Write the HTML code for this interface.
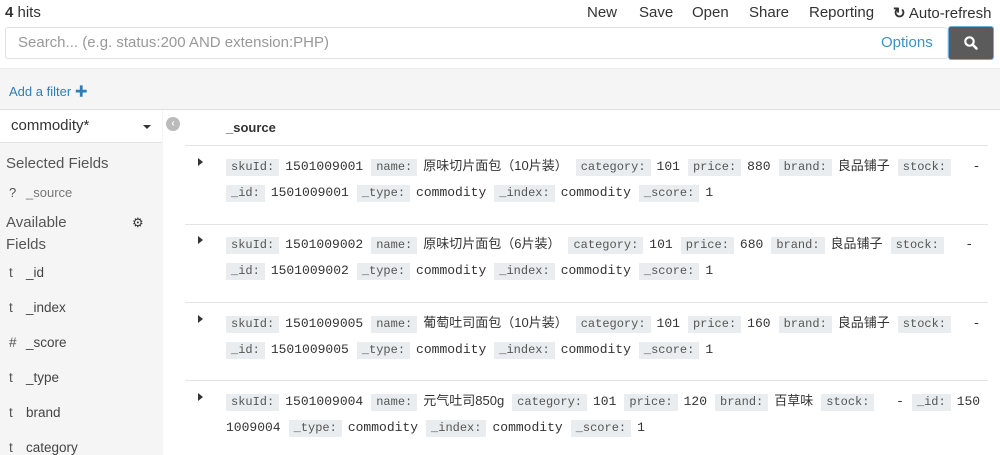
<!DOCTYPE html>
<html><head><meta charset="utf-8"><style>
*{margin:0;padding:0;box-sizing:border-box}
body{width:1000px;height:455px;overflow:hidden;background:#fff;font-family:"Liberation Sans","Noto Sans CJK SC",sans-serif;color:#3f3f3f;position:relative}
.a{position:absolute;white-space:nowrap}
.lb{display:inline-block;background:#e9edef;font-family:"Liberation Mono",monospace;font-size:12px;color:#555;padding:0 5px;line-height:17px;margin-right:6px}
.v{font-family:"Liberation Mono","Noto Sans CJK SC",monospace;font-size:13px;color:#333;margin-right:8px}
.c{font-family:"Liberation Sans","Noto Sans CJK SC",sans-serif;font-size:13px}
.row{position:absolute;left:226px;width:780px;line-height:24.5px;white-space:nowrap}
.tri{position:absolute;left:198px;width:0;height:0;border-top:4px solid transparent;border-bottom:4px solid transparent;border-left:5px solid #333}
.sep{position:absolute;left:185px;width:803px;height:1px;background:#e4e4e4}
.f{position:absolute;left:9px;font-size:13.5px;color:#444}
.f b{font-weight:normal;display:inline-block;width:17px;color:#555}
</style></head><body>
<div class="a" style="left:5px;top:4px;font-size:15px;color:#333"><b>4</b> hits</div>
<div class="a" style="top:4px;left:587px;font-size:15px;color:#333">New</div>
<div class="a" style="top:4px;left:639px;font-size:15px;color:#333">Save</div>
<div class="a" style="top:4px;left:692px;font-size:15px;color:#333">Open</div>
<div class="a" style="top:4px;left:749px;font-size:15px;color:#333">Share</div>
<div class="a" style="top:4px;left:809px;font-size:15px;color:#333">Reporting</div>
<div class="a" style="top:4px;left:893px;font-size:15px;color:#333"><span style="font-weight:bold">↻</span> Auto-refresh</div>
<div class="a" style="left:5px;top:27px;width:943px;height:32px;border:1px solid #e2e2e2;border-radius:3px;background:#fff"></div>
<div class="a" style="left:18px;top:34px;font-size:15px;color:#999">Search... (e.g. status:200 AND extension:PHP)</div>
<div class="a" style="left:881px;top:34px;font-size:15px;color:#3c93c6">Options</div>
<div class="a" style="left:948px;top:26px;width:46px;height:34px;background:#5b5b5b;border:1px solid #6aaee0;border-radius:3px"></div>
<svg class="a" style="left:963px;top:35px" width="16" height="16" viewBox="0 0 16 16"><circle cx="6.5" cy="6.5" r="4.2" fill="none" stroke="#fff" stroke-width="2.2"/><path d="M9.5 9.5L13.5 13.5" stroke="#fff" stroke-width="2.6" stroke-linecap="round"/></svg>
<div class="a" style="left:0;top:68px;width:1000px;height:42px;background:#f5f5f5;border-top:1px solid #ececec;border-bottom:1px solid #e0e0e0"></div>
<div class="a" style="left:9px;top:81px;font-size:13px;color:#2d7eb5">Add a filter <b>✚</b></div>
<div class="a" style="left:0;top:110px;width:163px;height:345px;background:#f5f5f5"></div>
<div class="a" style="left:0;top:110px;width:162px;height:33px;background:#fff;border-bottom:1px solid #e4e4e4"></div>
<div class="a" style="left:11px;top:117px;font-size:15px;color:#333">commodity*</div>
<div class="a" style="left:143px;top:125px;border-left:4px solid transparent;border-right:4px solid transparent;border-top:4px solid #333"></div>
<div class="a" style="left:166px;top:117px;width:14px;height:14px;border-radius:50%;background:#bbb;color:#fff;font-size:10px;line-height:14px;text-align:center;font-weight:bold">‹</div>
<div class="a" style="left:6px;top:155px;font-size:15px;color:#555">Selected Fields</div>
<div class="f" style="top:185px;font-size:13px;color:#777"><b>?</b>_source</div>
<div class="a" style="left:6px;top:212px;font-size:15px;color:#555;line-height:22px">Available<br>Fields</div>
<div class="a" style="left:132px;top:215px;font-size:13px;color:#333">⚙</div>
<div class="f" style="top:265px"><b>t</b>_id</div>
<div class="f" style="top:300px"><b>t</b>_index</div>
<div class="f" style="top:335px"><b>#</b>_score</div>
<div class="f" style="top:370px"><b>t</b>_type</div>
<div class="f" style="top:405px"><b>t</b>brand</div>
<div class="f" style="top:440px"><b>t</b>category</div>
<div class="a" style="left:226px;top:120px;font-size:13px;font-weight:bold;color:#333">_source</div>
<div class="sep" style="top:145px"></div>
<div class="tri" style="top:158px"></div>
<div class="row" style="top:154px"><span class="lb">skuId:</span><span class="v">1501009001</span><span class="lb">name:</span><span class="v c">原味切片面包（10片装）</span><span class="lb">category:</span><span class="v">101</span><span class="lb">price:</span><span class="v">880</span><span class="lb">brand:</span><span class="v c">良品铺子</span><span class="lb">stock:</span><span class="v">&nbsp; -</span><br><span class="lb">_id:</span><span class="v">1501009001</span><span class="lb">_type:</span><span class="v">commodity</span><span class="lb">_index:</span><span class="v">commodity</span><span class="lb">_score:</span><span class="v">1</span></div>
<div class="sep" style="top:224px"></div>
<div class="tri" style="top:236px"></div>
<div class="row" style="top:232px"><span class="lb">skuId:</span><span class="v">1501009002</span><span class="lb">name:</span><span class="v c">原味切片面包（6片装）</span><span class="lb">category:</span><span class="v">101</span><span class="lb">price:</span><span class="v">680</span><span class="lb">brand:</span><span class="v c">良品铺子</span><span class="lb">stock:</span><span class="v">&nbsp; -</span><br><span class="lb">_id:</span><span class="v">1501009002</span><span class="lb">_type:</span><span class="v">commodity</span><span class="lb">_index:</span><span class="v">commodity</span><span class="lb">_score:</span><span class="v">1</span></div>
<div class="sep" style="top:302px"></div>
<div class="tri" style="top:315px"></div>
<div class="row" style="top:311px"><span class="lb">skuId:</span><span class="v">1501009005</span><span class="lb">name:</span><span class="v c">葡萄吐司面包（10片装）</span><span class="lb">category:</span><span class="v">101</span><span class="lb">price:</span><span class="v">160</span><span class="lb">brand:</span><span class="v c">良品铺子</span><span class="lb">stock:</span><span class="v">&nbsp; -</span><br><span class="lb">_id:</span><span class="v">1501009005</span><span class="lb">_type:</span><span class="v">commodity</span><span class="lb">_index:</span><span class="v">commodity</span><span class="lb">_score:</span><span class="v">1</span></div>
<div class="sep" style="top:380px"></div>
<div class="tri" style="top:393px"></div>
<div class="row" style="top:389px"><span class="lb">skuId:</span><span class="v">1501009004</span><span class="lb">name:</span><span class="v c">元气吐司850g</span><span class="lb">category:</span><span class="v">101</span><span class="lb">price:</span><span class="v">120</span><span class="lb">brand:</span><span class="v c">百草味</span><span class="lb">stock:</span><span class="v">&nbsp; -</span><span class="lb">_id:</span><span class="v">150</span><br><span class="v">1009004</span><span class="lb">_type:</span><span class="v">commodity</span><span class="lb">_index:</span><span class="v">commodity</span><span class="lb">_score:</span><span class="v">1</span></div>
</body></html>
